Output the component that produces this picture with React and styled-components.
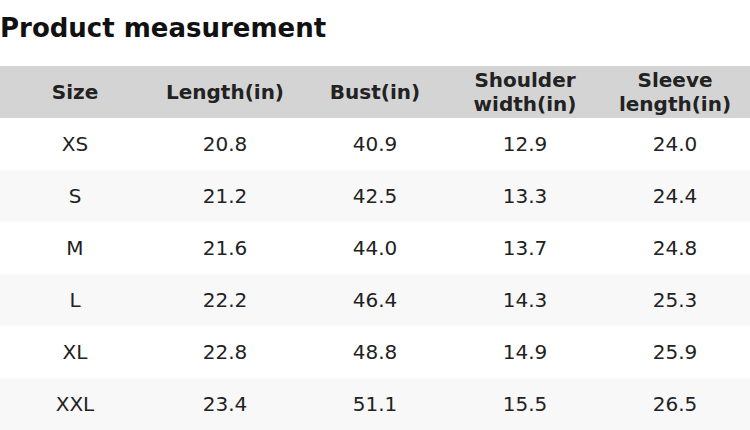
import React from 'react'
import styled, { createGlobalStyle } from 'styled-components'

const GlobalStyle = createGlobalStyle`
  body {
    margin: 0;
    background: #fff;
    font-family: "DejaVu Sans", "Liberation Sans", sans-serif;
    color: #222;
  }
`

const columns = ['Size', 'Length(in)', 'Bust(in)', 'Shoulder width(in)', 'Sleeve length(in)']

const rows = [
  ['XS', '20.8', '40.9', '12.9', '24.0'],
  ['S', '21.2', '42.5', '13.3', '24.4'],
  ['M', '21.6', '44.0', '13.7', '24.8'],
  ['L', '22.2', '46.4', '14.3', '25.3'],
  ['XL', '22.8', '48.8', '14.9', '25.9'],
  ['XXL', '23.4', '51.1', '15.5', '26.5'],
]

const App = () => {
  return (
    <Page>
      <GlobalStyle />
      <Title>Product measurement</Title>
      <Table>
        <HeadRow>
          {columns.map((c) => (
            <HeadCell key={c}>{c}</HeadCell>
          ))}
        </HeadRow>
        {rows.map((r, i) => (
          <Row key={r[0]} $striped={i % 2 === 1}>
            {r.map((v, j) => (
              <Cell key={j}>{v}</Cell>
            ))}
          </Row>
        ))}
      </Table>
    </Page>
  )
}

const Page = styled.div`
  width: 750px;
  height: 430px;
  overflow: hidden;
`

const Title = styled.h2`
  margin: 0;
  height: 66px;
  padding-top: 12px;
  box-sizing: border-box;
  font-size: 26px;
  font-weight: bold;
  color: #111;
  line-height: 32px;
`

const Table = styled.div`
  display: flex;
  flex-direction: column;
`

const HeadRow = styled.div`
  display: grid;
  grid-template-columns: repeat(5, 150px);
  height: 52px;
  background-color: #d4d4d4;
`

const Row = styled.div`
  display: grid;
  grid-template-columns: repeat(5, 150px);
  height: 52px;
  background-color: ${(p) => (p.$striped ? '#f8f8f8' : '#fff')};
`

const HeadCell = styled.div`
  display: flex;
  align-items: center;
  justify-content: center;
  text-align: center;
  font-weight: bold;
  font-size: 20px;
  line-height: 24px;
  color: #222;
  padding: 0 8px;
`

const Cell = styled.div`
  display: flex;
  align-items: center;
  justify-content: center;
  font-size: 20px;
  color: #222;
`

export default App
